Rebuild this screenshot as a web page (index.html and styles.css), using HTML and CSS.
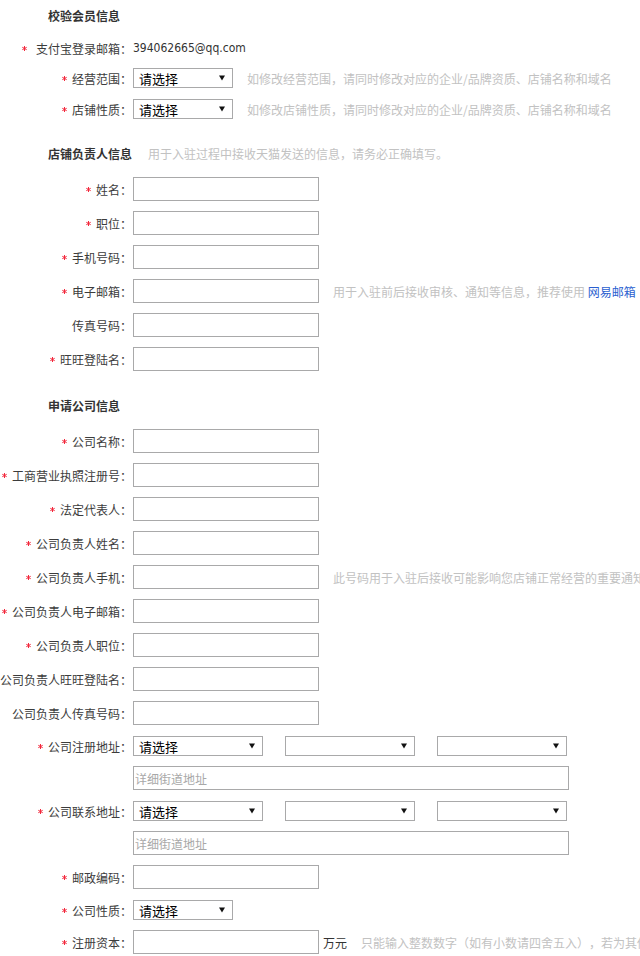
FILE: index.html
```html
<!DOCTYPE html>
<html lang="zh-CN">
<head>
<meta charset="utf-8">
<title>校验会员信息</title>
<link rel="stylesheet" href="styles.css">
</head>
<body>
<div class="page">

  <section class="group group-first">
    <div class="title">校验会员信息</div>
    <div class="row row-text">
      <span class="lbl"><svg class="req req-wide" viewBox="0 0 5 5"><path d="M2.5 0V5M0.3 1.3L4.7 3.7M0.3 3.7L4.7 1.3"/></svg>支付宝登录邮箱：</span>
      <span class="val">394062665@qq.com</span>
    </div>
    <div class="row row-sel row-sel-tight">
      <span class="lbl"><svg class="req" viewBox="0 0 5 5"><path d="M2.5 0V5M0.3 1.3L4.7 3.7M0.3 3.7L4.7 1.3"/></svg>经营范围：</span>
      <div class="sel sel-s"><span>请选择</span><svg class="caret" viewBox="0 0 7 6"><path d="M0 0H7L3.5 6Z"/></svg></div>
      <span class="hint">如修改经营范围，请同时修改对应的企业/品牌资质、店铺名称和域名</span>
    </div>
    <div class="row row-sel">
      <span class="lbl"><svg class="req" viewBox="0 0 5 5"><path d="M2.5 0V5M0.3 1.3L4.7 3.7M0.3 3.7L4.7 1.3"/></svg>店铺性质：</span>
      <div class="sel sel-s"><span>请选择</span><svg class="caret" viewBox="0 0 7 6"><path d="M0 0H7L3.5 6Z"/></svg></div>
      <span class="hint">如修改店铺性质，请同时修改对应的企业/品牌资质、店铺名称和域名</span>
    </div>
  </section>

  <section class="group">
    <div class="title">店铺负责人信息<span class="title-hint">用于入驻过程中接收天猫发送的信息，请务必正确填写。</span></div>
    <div class="row row-first">
      <span class="lbl"><svg class="req" viewBox="0 0 5 5"><path d="M2.5 0V5M0.3 1.3L4.7 3.7M0.3 3.7L4.7 1.3"/></svg>姓名：</span>
      <input class="inp" type="text">
    </div>
    <div class="row">
      <span class="lbl"><svg class="req" viewBox="0 0 5 5"><path d="M2.5 0V5M0.3 1.3L4.7 3.7M0.3 3.7L4.7 1.3"/></svg>职位：</span>
      <input class="inp" type="text">
    </div>
    <div class="row">
      <span class="lbl"><svg class="req" viewBox="0 0 5 5"><path d="M2.5 0V5M0.3 1.3L4.7 3.7M0.3 3.7L4.7 1.3"/></svg>手机号码：</span>
      <input class="inp" type="text">
    </div>
    <div class="row">
      <span class="lbl"><svg class="req" viewBox="0 0 5 5"><path d="M2.5 0V5M0.3 1.3L4.7 3.7M0.3 3.7L4.7 1.3"/></svg>电子邮箱：</span>
      <input class="inp" type="text">
      <span class="hint">用于入驻前后接收审核、通知等信息，推荐使用 <a class="link" href="#">网易邮箱</a></span>
    </div>
    <div class="row">
      <span class="lbl">传真号码：</span>
      <input class="inp" type="text">
    </div>
    <div class="row">
      <span class="lbl"><svg class="req" viewBox="0 0 5 5"><path d="M2.5 0V5M0.3 1.3L4.7 3.7M0.3 3.7L4.7 1.3"/></svg>旺旺登陆名：</span>
      <input class="inp" type="text">
    </div>
  </section>

  <section class="group">
    <div class="title">申请公司信息</div>
    <div class="row row-first">
      <span class="lbl"><svg class="req" viewBox="0 0 5 5"><path d="M2.5 0V5M0.3 1.3L4.7 3.7M0.3 3.7L4.7 1.3"/></svg>公司名称：</span>
      <input class="inp" type="text">
    </div>
    <div class="row">
      <span class="lbl"><svg class="req" viewBox="0 0 5 5"><path d="M2.5 0V5M0.3 1.3L4.7 3.7M0.3 3.7L4.7 1.3"/></svg>工商营业执照注册号：</span>
      <input class="inp" type="text">
    </div>
    <div class="row">
      <span class="lbl"><svg class="req" viewBox="0 0 5 5"><path d="M2.5 0V5M0.3 1.3L4.7 3.7M0.3 3.7L4.7 1.3"/></svg>法定代表人：</span>
      <input class="inp" type="text">
    </div>
    <div class="row">
      <span class="lbl"><svg class="req" viewBox="0 0 5 5"><path d="M2.5 0V5M0.3 1.3L4.7 3.7M0.3 3.7L4.7 1.3"/></svg>公司负责人姓名：</span>
      <input class="inp" type="text">
    </div>
    <div class="row">
      <span class="lbl"><svg class="req" viewBox="0 0 5 5"><path d="M2.5 0V5M0.3 1.3L4.7 3.7M0.3 3.7L4.7 1.3"/></svg>公司负责人手机：</span>
      <input class="inp" type="text">
      <span class="hint">此号码用于入驻后接收可能影响您店铺正常经营的重要通知</span>
    </div>
    <div class="row">
      <span class="lbl"><svg class="req" viewBox="0 0 5 5"><path d="M2.5 0V5M0.3 1.3L4.7 3.7M0.3 3.7L4.7 1.3"/></svg>公司负责人电子邮箱：</span>
      <input class="inp" type="text">
    </div>
    <div class="row">
      <span class="lbl"><svg class="req" viewBox="0 0 5 5"><path d="M2.5 0V5M0.3 1.3L4.7 3.7M0.3 3.7L4.7 1.3"/></svg>公司负责人职位：</span>
      <input class="inp" type="text">
    </div>
    <div class="row">
      <span class="lbl">公司负责人旺旺登陆名：</span>
      <input class="inp" type="text">
    </div>
    <div class="row">
      <span class="lbl">公司负责人传真号码：</span>
      <input class="inp" type="text">
    </div>
    <div class="row row-sel">
      <span class="lbl"><svg class="req" viewBox="0 0 5 5"><path d="M2.5 0V5M0.3 1.3L4.7 3.7M0.3 3.7L4.7 1.3"/></svg>公司注册地址：</span>
      <div class="sel sel-m"><span>请选择</span><svg class="caret" viewBox="0 0 7 6"><path d="M0 0H7L3.5 6Z"/></svg></div>
      <div class="sel sel-m"><svg class="caret" viewBox="0 0 7 6"><path d="M0 0H7L3.5 6Z"/></svg></div>
      <div class="sel sel-m"><svg class="caret" viewBox="0 0 7 6"><path d="M0 0H7L3.5 6Z"/></svg></div>
    </div>
    <div class="row">
      <span class="lbl"></span>
      <input class="inp inp-wide" type="text" placeholder="详细街道地址">
    </div>
    <div class="row row-sel">
      <span class="lbl"><svg class="req" viewBox="0 0 5 5"><path d="M2.5 0V5M0.3 1.3L4.7 3.7M0.3 3.7L4.7 1.3"/></svg>公司联系地址：</span>
      <div class="sel sel-m"><span>请选择</span><svg class="caret" viewBox="0 0 7 6"><path d="M0 0H7L3.5 6Z"/></svg></div>
      <div class="sel sel-m"><svg class="caret" viewBox="0 0 7 6"><path d="M0 0H7L3.5 6Z"/></svg></div>
      <div class="sel sel-m"><svg class="caret" viewBox="0 0 7 6"><path d="M0 0H7L3.5 6Z"/></svg></div>
    </div>
    <div class="row">
      <span class="lbl"></span>
      <input class="inp inp-wide" type="text" placeholder="详细街道地址">
    </div>
    <div class="row">
      <span class="lbl"><svg class="req" viewBox="0 0 5 5"><path d="M2.5 0V5M0.3 1.3L4.7 3.7M0.3 3.7L4.7 1.3"/></svg>邮政编码：</span>
      <input class="inp" type="text">
    </div>
    <div class="row row-sel">
      <span class="lbl"><svg class="req" viewBox="0 0 5 5"><path d="M2.5 0V5M0.3 1.3L4.7 3.7M0.3 3.7L4.7 1.3"/></svg>公司性质：</span>
      <div class="sel sel-s"><span>请选择</span><svg class="caret" viewBox="0 0 7 6"><path d="M0 0H7L3.5 6Z"/></svg></div>
    </div>
    <div class="row">
      <span class="lbl"><svg class="req" viewBox="0 0 5 5"><path d="M2.5 0V5M0.3 1.3L4.7 3.7M0.3 3.7L4.7 1.3"/></svg>注册资本：</span>
      <input class="inp" type="text">
      <span class="unit">万元</span>
      <span class="hint">只能输入整数数字（如有小数请四舍五入），若为其他币种，请按当日汇率换算成人民币</span>
    </div>
  </section>

</div>
</body>
</html>
```

FILE: styles.css
```css
html, body {
  margin: 0;
  padding: 0;
  overflow: hidden;
  background: #fff;
}

.page {
  width: 640px;
  overflow: hidden;
  padding-top: 6px;
  font-family: "Noto Sans CJK SC", "Noto Sans", sans-serif;
  font-size: 12px;
  color: #3c3c3c;
  text-spacing-trim: space-all;
  font-kerning: none;
}

.group {
  margin-top: 25px;
}

.group-first {
  margin-top: 0;
}

.title {
  height: 20px;
  line-height: 20px;
  padding-left: 48px;
  font-weight: bold;
  color: #333;
  white-space: nowrap;
}

.title-hint {
  margin-left: 16px;
  font-weight: normal;
  color: #c2c2c2;
}

.row {
  display: flex;
  align-items: center;
  height: 24px;
  margin-top: 10px;
  white-space: nowrap;
}

.row-first {
  margin-top: 13px;
}

.row-text {
  height: 20px;
  margin-top: 12px;
}

.row-sel {
  height: 20px;
  margin-top: 11px;
}

.row-sel-tight {
  margin-top: 10px;
}

.lbl {
  flex: 0 0 132px;
  width: 132px;
  display: flex;
  justify-content: flex-end;
  align-items: center;
  white-space: nowrap;
  color: #3c3c3c;
}

.req {
  width: 5px;
  height: 5px;
  margin-right: 5px;
  fill: none;
  stroke: #f2283c;
  stroke-width: 1;
  flex: 0 0 5px;
}

.req-wide {
  margin-right: 9px;
}

.val {
  margin-left: 1px;
  font-family: "DejaVu Sans Condensed", "DejaVu Sans", sans-serif;
  font-size: 12px;
  color: #333;
}

.inp {
  box-sizing: border-box;
  width: 186px;
  height: 24px;
  margin: 0 0 0 1px;
  padding: 0 1px;
  border: 1px solid #a9a9aa;
  border-radius: 0;
  outline: none;
  background: #fff;
  font-family: "Noto Sans CJK SC", sans-serif;
  font-size: 12px;
  color: #333;
  flex: 0 0 auto;
}

.inp-wide {
  width: 436px;
}

.inp::placeholder {
  color: #a8a8a8;
}

.sel {
  box-sizing: border-box;
  display: flex;
  align-items: center;
  height: 20px;
  margin-left: 1px;
  padding: 0 7px 0 5px;
  border: 1px solid #a9a9aa;
  background: #fff;
  font-size: 13px;
  color: #000;
  flex: 0 0 auto;
}

.sel-s {
  width: 100px;
}

.sel-m {
  width: 130px;
  margin-right: 21px;
}

.caret {
  width: 6px;
  height: 6px;
  margin-left: auto;
  fill: #111;
}

.hint {
  margin-left: 14px;
  color: #c2c2c2;
  white-space: nowrap;
}

.link {
  color: #2b5fd0;
  text-decoration: none;
}

.unit {
  margin-left: 4px;
  color: #333;
}

.unit + .hint {
  margin-left: 14px;
}
```
